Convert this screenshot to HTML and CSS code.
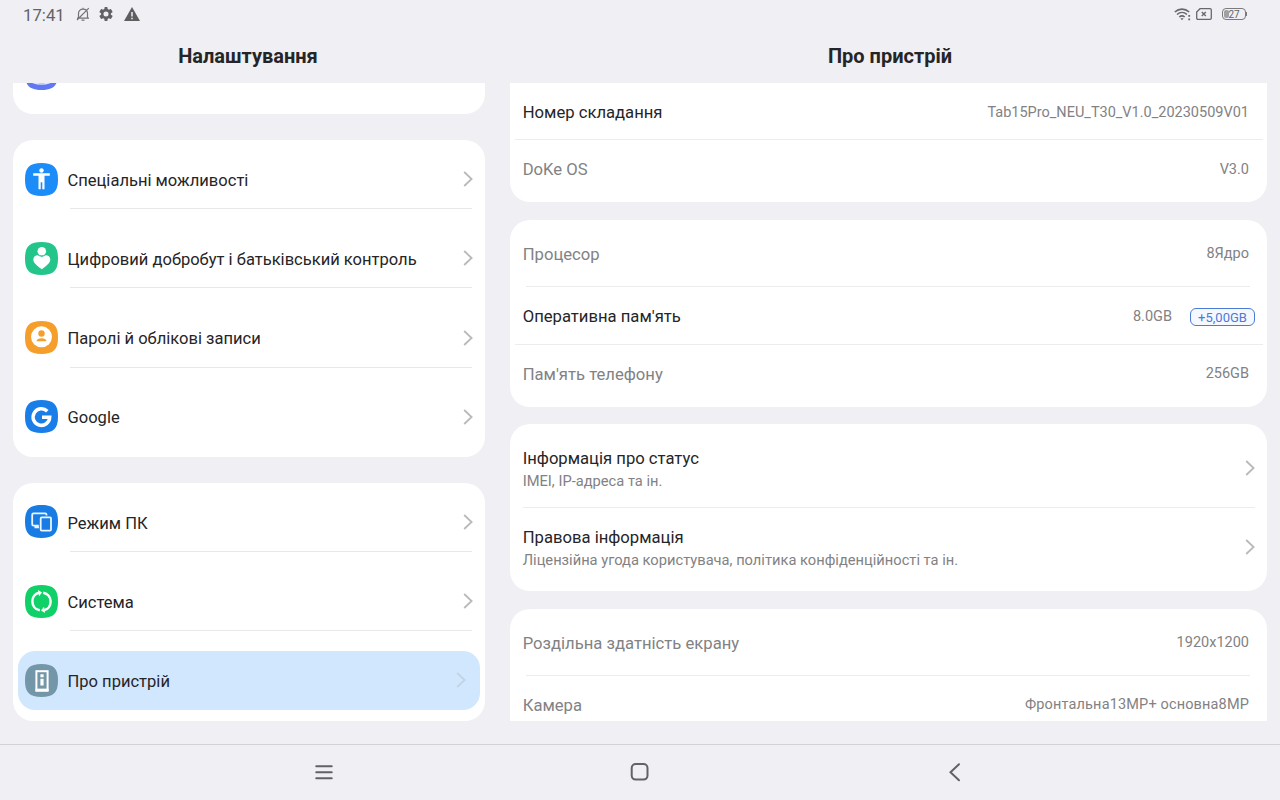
FILE: index.html
```html
<!DOCTYPE html>
<html lang="uk">
<head>
<meta charset="utf-8">
<title>Налаштування</title>
<link rel="stylesheet" href="styles.css">
</head>
<body>
<svg class="defs" aria-hidden="true">
  <symbol id="chev" viewBox="0 0 10 16"><path d="M1.2 1 8.6 8 1.2 15" fill="none" stroke="currentColor" stroke-width="1.8"/></symbol>
  <symbol id="tile" viewBox="0 0 33 33"><path d="M16.5 0C28.5 0 33 4.500 33 16.500S28.500 33 16.500 33 0 28.500 0 16.500 4.500 0 16.500 0Z" fill="currentColor"/></symbol>
</svg>

<header class="status">
  <span class="clock">17:41</span>
  <svg class="bell" width="14" height="15" viewBox="0 0 14 15" fill="none" stroke="#747477" stroke-width="1.2"><path d="M2.500 10.800V6.500C2.500 3.800 4.300 2.200 7 2.200s4.500 1.600 4.500 4.300v4.300M1 11.200h12M5.500 13.200h3M7 .8v1.400M1 13 12.800 1.200"/></svg>
  <svg class="gear" width="16" height="16" viewBox="0 0 24 24" fill="#626265"><path d="M19.400 13a7.500 7.500 0 0 0 0-2l2.300-1.700c.2-.2.3-.5.1-.8l-2.200-3.700c-.1-.2-.4-.3-.7-.2l-2.600 1a8 8 0 0 0-1.800-1L14.100 1.900a.6.6 0 0 0-.6-.5h-3a.6.6 0 0 0-.6.5l-.4 2.700a8 8 0 0 0-1.800 1l-2.600-1c-.3-.1-.6 0-.7.2L2.200 8.500c-.2.300-.1.600.1.800L4.600 11a7.500 7.500 0 0 0 0 2l-2.300 1.700c-.2.200-.3.500-.1.800l2.200 3.700c.1.200.4.300.7.200l2.600-1a8 8 0 0 0 1.800 1l.4 2.700c0 .3.300.5.600.5h3c.3 0 .6-.2.600-.5l.4-2.700a8 8 0 0 0 1.800-1l2.600 1c.3.100.6 0 .7-.2l2.200-3.700c.2-.3.100-.6-.1-.8zM12 15.800a3.800 3.800 0 1 1 0-7.600 3.800 3.800 0 0 1 0 7.600Z"/></svg>
  <svg class="warn" width="16" height="14" viewBox="0 0 16 14"><path d="M8 0 16 14H0Z" fill="#5e5e61"/><path d="M8 5v4.500M8 10.700v1.500" stroke="#efeff4" stroke-width="1.500"/></svg>
  <span class="spacer"></span>
  <svg class="wifi" width="18" height="13" viewBox="0 0 18 13" fill="none" stroke="#68686b" stroke-width="1.600"><path d="M.8 4C5 .2 11 .2 15.200 4M3 6.500c3-2.700 7-2.700 10 0M5.300 9c1.700-1.400 3.700-1.400 5.400 0"/><path d="m6.300 10.200 1.700 2 1.700-2Z" fill="#68686b" stroke="none"/><path d="M15.200 7v1.800M15.200 10.400v1.800" stroke-width="1.800"/></svg>
  <svg class="sim" width="16" height="12" viewBox="0 0 16 12" fill="none" stroke="#68686b"><path d="M4 .7h10c.8 0 1.300.5 1.300 1.300v8c0 .8-.5 1.300-1.300 1.300H2C1.200 11.300.7 10.800.7 10V4Z" stroke-width="1.300"/><path d="m5.800 4 4 4m0-4-4 4" stroke-width="1.400"/></svg>
  <span class="battery"><span class="charge"></span><span class="pct">27</span></span>
</header>

<main class="panes">
  <section class="pane side">
    <h1>Налаштування</h1>
    <div class="scroll">
      <div class="card tail"><svg class="icon blurple" viewBox="0 0 33 33"><use href="#tile"/><path d="M8 25.500Q16.500 28.500 25 25.500" fill="none" stroke="#dfe4fc" stroke-width="1.500"/></svg></div>
      <div class="card">
        <div class="row"><div class="item">
          <svg class="icon" viewBox="0 0 33 33" color="#1b8cf8"><use href="#tile"/><g fill="#fff"><circle cx="16.500" cy="7.500" r="2.200"/><path d="M8.200 10.300h16.600v2.400h-5.300v13.600h-2.200v-7h-1.600v7h-2.200V12.700H8.200Z"/></g></svg>
          <span class="label">Спеціальні можливості</span><svg class="chev"><use href="#chev"/></svg></div></div>
        <div class="row"><div class="item">
          <svg class="icon" viewBox="0 0 33 33" color="#23c58b"><use href="#tile"/><g fill="#fff"><circle cx="16.800" cy="9.300" r="4.300"/><path d="M16.800 27.300C12 23.500 8.300 21 8.300 17.500c0-4.500 5.600-5.600 8.500-2.500 2.900-3.100 8.500-2 8.500 2.500 0 3.500-3.700 6-8.500 9.800Z"/></g><path d="M13.200 13.200c1.800 1.300 5.400 1.300 7.200 0" fill="none" stroke="#23c58b" stroke-width=".8"/></svg>
          <span class="label">Цифровий добробут і батьківський контроль</span><svg class="chev"><use href="#chev"/></svg></div></div>
        <div class="row"><div class="item">
          <svg class="icon" viewBox="0 0 33 33" color="#f59e2b"><use href="#tile"/><circle cx="16.500" cy="15.800" r="10.500" fill="#fff"/><circle cx="16.500" cy="12.500" r="3.200" fill="currentColor"/><path d="M11.500 20.300c0-4.200 10-4.200 10 0Z" fill="currentColor"/></svg>
          <span class="label">Паролі й облікові записи</span><svg class="chev"><use href="#chev"/></svg></div></div>
        <div class="row"><div class="item">
          <svg class="icon" viewBox="0 0 33 33" color="#1a7ee8"><use href="#tile"/><path d="M22.300 11.200A8.300 8.300 0 1 0 24.700 17.300H17" fill="none" stroke="#fff" stroke-width="3.500"/></svg>
          <span class="label">Google</span><svg class="chev"><use href="#chev"/></svg></div></div>
      </div>
      <div class="card">
        <div class="row"><div class="item">
          <svg class="icon" viewBox="0 0 33 33" color="#187ce4"><use href="#tile"/><g fill="none" stroke="#eaf5ff" stroke-width="1.800"><path d="M21.500 10.500V9.700c0-.8-.5-1.300-1.300-1.300H8.500c-.8 0-1.300.5-1.300 1.300v9.600c0 .8.500 1.300 1.300 1.300h5.300M9.500 22.300h4.500M12 20.600v2"/><rect x="15.700" y="12.300" width="10.300" height="13.300" rx="1"/></g></svg>
          <span class="label">Режим ПК</span><svg class="chev"><use href="#chev"/></svg></div></div>
        <div class="row"><div class="item">
          <svg class="icon" viewBox="0 0 33 33" color="#0fd167"><use href="#tile"/><g fill="none" stroke="#fff" stroke-width="2.500"><path d="M14.800 25.300C4.800 23.500 5.300 9.500 14 7.800M18.200 7.700c10 1.800 9.500 15.800.8 17.500"/></g><path d="m13 5 4 2.600-3 3.600ZM20 28l-4-2.600 3-3.600Z" fill="#fff"/></svg>
          <span class="label">Система</span><svg class="chev"><use href="#chev"/></svg></div></div>
        <div class="row"><div class="item selected">
          <svg class="icon" viewBox="0 0 33 33" color="#7397a8"><use href="#tile"/><rect x="11.400" y="7.200" width="11.200" height="18.600" fill="none" stroke="#fff" stroke-width="2"/><path d="M10.400 24.800h13.200v3H10.400Z" fill="#fff"/><path d="M15.400 10.300h3.200v3h-3.200ZM15.400 14.700h3.200v6.800h-3.200Z" fill="#fff"/></svg>
          <span class="label">Про пристрій</span><svg class="chev"><use href="#chev"/></svg></div></div>
      </div>
    </div>
  </section>

  <section class="pane about">
    <h1>Про пристрій</h1>
    <div class="scroll">
      <div class="card first">
        <div class="info r57 wide"><span class="label">Номер складання</span><span class="value">Tab15Pro_NEU_T30_V1.0_20230509V01</span></div>
        <div class="info r62"><span class="label muted">DoKe OS</span><span class="value up">V3.0</span></div>
      </div>
      <div class="card">
        <div class="info r67 inset"><span class="label muted">Процесор</span><span class="value up">8Ядро</span></div>
        <div class="info r58 wide"><span class="label">Оперативна пам'ять</span><span class="value low">8.0GB</span><span class="chip">+5,00GB</span></div>
        <div class="info r62"><span class="label muted">Пам'ять телефону</span><span class="value up">256GB</span></div>
      </div>
      <div class="card">
        <div class="info link r83"><div class="stack"><span class="label">Інформація про статус</span><span class="sub">IMEI, IP-адреса та ін.</span></div><svg class="chev"><use href="#chev"/></svg></div>
        <div class="info link r84"><div class="stack"><span class="label">Правова інформація</span><span class="sub">Ліцензійна угода користувача, політика конфіденційності та ін.</span></div><svg class="chev"><use href="#chev"/></svg></div>
      </div>
      <div class="card last">
        <div class="info r67 inset"><span class="label muted">Роздільна здатність екрану</span><span class="value up">1920x1200</span></div>
        <div class="info r58"><span class="label muted">Камера</span><span class="value up spaced">Фронтальна13MP+ основна8MP</span></div>
      </div>
    </div>
  </section>
</main>

<nav class="navbar">
  <svg width="20" height="20" viewBox="0 0 20 20" fill="none" stroke="#626266" stroke-width="2.100" stroke-linecap="round"><path d="M2.300 4.200h15.400M2.300 10.200h15.400M2.300 16.300h15.400"/></svg>
  <svg width="20" height="20" viewBox="0 0 20 20" fill="none" stroke="#626266" stroke-width="2"><rect x="1.700" y="2" width="15.800" height="15.600" rx="4"/></svg>
  <svg width="20" height="20" viewBox="0 0 20 20" fill="none" stroke="#626266" stroke-width="2" stroke-linecap="round"><path d="M14 2.300 5.500 10.300l8.500 8"/></svg>
</nav>
</body>
</html>
```
FILE: styles.css
```css
* { box-sizing: border-box; }
body {
  margin: 0;
  width: 1280px;
  height: 800px;
  overflow: hidden;
  display: flex;
  flex-direction: column;
  background: #efeff4;
  color: #252527;
  font-family: Roboto, "Noto Sans", sans-serif;
}
.defs { display: none; }
svg { display: block; flex: none; }

.status {
  height: 30px;
  padding: 0 32px 2px 23px;
  display: flex;
  align-items: center;
  color: #636366;
}
.clock { font-size: 16.800px; padding-top: 2px; width: 53px; }
.gear { margin-left: 8px; }
.warn { margin-left: 10px; }
.spacer { flex: 1; }
.sim { margin-left: 4px; }
.battery {
  position: relative;
  width: 24px;
  height: 12px;
  margin: 0 2px 0 10px;
  border: 1px solid #7b7b7e;
  border-radius: 4px;
  display: flex;
  align-items: center;
  justify-content: center;
}
.battery::after {
  content: "";
  position: absolute;
  right: -2px;
  top: 3px;
  width: 1px;
  height: 4px;
  background: #7b7b7e;
}
.charge { position: absolute; left: 1px; top: 1px; width: 5px; height: 8px; background: #a0a0a3; border-radius: 2px; }
.pct { position: relative; font-size: 10px; line-height: 10px; padding-top: 1px; }

.panes { height: 691px; display: flex; gap: 25px; padding: 0 13px 0 13px; }
.side { width: 472px; }
.about { width: 757px; }
h1 {
  margin: 0;
  height: 53px;
  line-height: 52px;
  font-size: 20px;
  font-weight: 700;
  text-align: center;
}
.side h1 { padding-right: 2px; }
.about h1 { padding-left: 3px; }
.scroll { height: 638px; overflow: hidden; display: flex; flex-direction: column; }
.side .scroll { gap: 26px; }
.about .scroll { gap: 17.500px; }
.card { flex: none; background: #fff; border-radius: 20px; }
.tail { height: 31.300px; border-radius: 0 0 20px 20px; padding-left: 12px; overflow: hidden; }
.tail .icon { margin-top: -26px; }
.first { border-radius: 0 0 20px 20px; }
.last { border-radius: 20px 20px 0 0; }

.icon { width: 33px; height: 33px; }
.blurple { color: #6079f2; }
.chev { width: 10px; height: 16px; color: #b9b9bb; }
.label { font-size: 16.550px; }

.row { height: 79.200px; padding: 9.600px 5px 0; position: relative; }
.row:not(:last-child)::after {
  content: "";
  position: absolute;
  left: 57px;
  right: 13px;
  top: 68px;
  height: 1px;
  background: #e8e8ea;
}
.item { height: 59px; padding: 0 7px; display: flex; align-items: center; }
.item .icon { margin-top: -.5px; }
.item .label { flex: 1; padding: 2px 0 0 9.500px; }
.item .chev { margin: -.5px .5px 0 0; }
.selected { background: #d1e7fe; border-radius: 17px; }
.item.selected .chev { margin-right: 7px; color: #c3d3e2; }

.info {
  position: relative;
  display: flex;
  align-items: center;
  padding: 0 18px 0 12.700px;
}
.info .label { margin-right: auto; font-size: 16.650px; }
.muted { color: #828284; }
.value { font-size: 14.500px; color: #828284; }
.up { padding-bottom: 1px; }
.low { padding-top: 1px; }
.spaced { letter-spacing: .15px; }
.r57 { height: 57px; padding-top: 2px; }
.r62 { height: 62px; padding-bottom: 3px; }
.r67 { height: 67px; padding-top: 2px; }
.r58 { height: 58px; padding-top: 1px; }
.r83 { height: 83.500px; padding-top: 5px; }
.r84 { height: 83.500px; padding-bottom: 4px; }
.wide::after, .inset::after, .r83::after {
  content: "";
  position: absolute;
  bottom: 0;
  height: 1px;
  background: #ececee;
}
.wide::after { left: 5px; right: 4px; }
.inset::after { left: 16px; right: 17px; }
.r83::after { left: 13px; right: 12px; }
.chip {
  width: 65px;
  height: 18px;
  margin: 1px -6px 0 18px;
  border: 1.500px solid #4a7bd6;
  border-radius: 6px;
  background: #f5f9ff;
  color: #4a7bd6;
  font-size: 13px;
  line-height: 17px;
  text-align: center;
}
.stack { flex: 1; display: flex; flex-direction: column; gap: 1px; padding-top: 3px; }
.stack .label { line-height: 22px; }
.sub { font-size: 14.700px; line-height: 20px; color: #828284; }
.link { padding-right: 12px; }

.navbar {
  margin-top: 23px;
  height: 56px;
  border-top: 1px solid #d2d2d7;
  display: flex;
  justify-content: space-between;
  align-items: center;
  padding: 0 315px 2px 314px;
}
```
